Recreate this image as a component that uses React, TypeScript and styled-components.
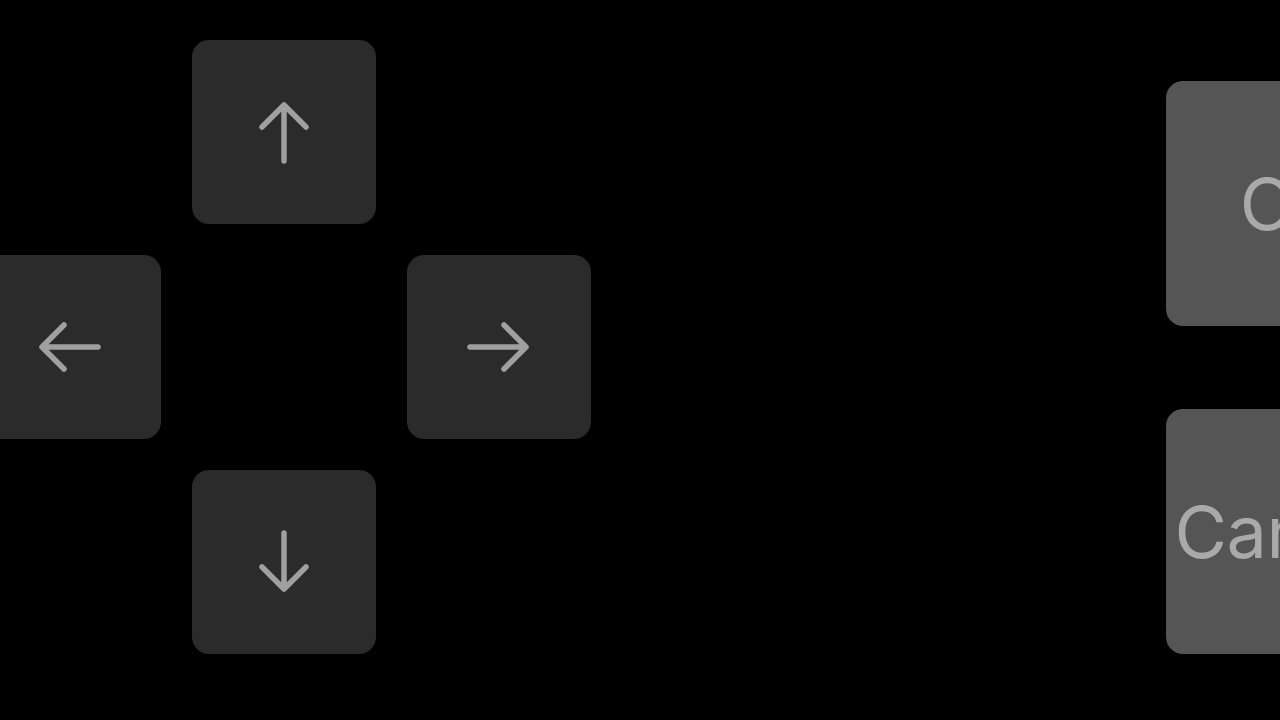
import React from "react";
import styled, { createGlobalStyle } from "styled-components";

const Global = createGlobalStyle`
  html, body { margin: 0; padding: 0; background: #000; }
  body { font-family: Inter, "Liberation Sans", sans-serif; }
`;

const Screen = styled.div`
  width: 1280px;
  height: 720px;
  overflow: hidden;
  background: #000;
  display: flex;
  align-items: flex-start;
`;

const Pad = styled.div`
  display: grid;
  grid-template-columns: repeat(3, 184px);
  grid-template-rows: repeat(3, 184px);
  gap: 31px;
  margin-left: -23px;
  margin-top: 40px;
  flex-shrink: 0;
`;

const Key = styled.button<{ $col: number; $row: number }>`
  grid-column: ${(p) => p.$col};
  grid-row: ${(p) => p.$row};
  width: 184px;
  height: 184px;
  border: none;
  padding: 0;
  border-radius: 17px;
  background: #2b2b2b;
  display: flex;
  align-items: center;
  justify-content: center;
`;

const Actions = styled.div`
  display: flex;
  flex-direction: column;
  gap: 83px;
  margin-left: 575px;
  margin-top: 81px;
  flex-shrink: 0;
`;

const ActionKey = styled.button`
  width: 250px;
  height: 245px;
  border: none;
  padding: 0;
  border-radius: 17px;
  background: #555555;
  color: #a9a9a9;
  font-family: Inter, "Liberation Sans", sans-serif;
  font-size: 72px;
  font-weight: 400;
  letter-spacing: -0.5px;
  display: flex;
  align-items: center;
  justify-content: center;
  white-space: nowrap;
`;

const ArrowSvg = styled.svg<{ $rot: number }>`
  width: 70px;
  height: 70px;
  transform: rotate(${(p) => p.$rot}deg);
`;

const Arrow = ({ rot }: { rot: number }) => (
  <ArrowSvg $rot={rot} viewBox="0 0 70 70" fill="none">
    <path
      d="M35 8 V64 M13 30 L35 8 L57 30"
      stroke="#a0a0a0"
      strokeWidth={5.5}
      strokeLinecap="round"
      strokeLinejoin="round"
    />
  </ArrowSvg>
);

export default function App() {
  return (
    <>
      <Global />
      <Screen>
        <Pad>
          <Key $col={2} $row={1} aria-label="Up">
            <Arrow rot={0} />
          </Key>
          <Key $col={1} $row={2} aria-label="Left">
            <Arrow rot={-90} />
          </Key>
          <Key $col={3} $row={2} aria-label="Right">
            <Arrow rot={90} />
          </Key>
          <Key $col={2} $row={3} aria-label="Down">
            <Arrow rot={180} />
          </Key>
        </Pad>
        <Actions>
          <ActionKey>OK</ActionKey>
          <ActionKey>Cancel</ActionKey>
        </Actions>
      </Screen>
    </>
  );
}
